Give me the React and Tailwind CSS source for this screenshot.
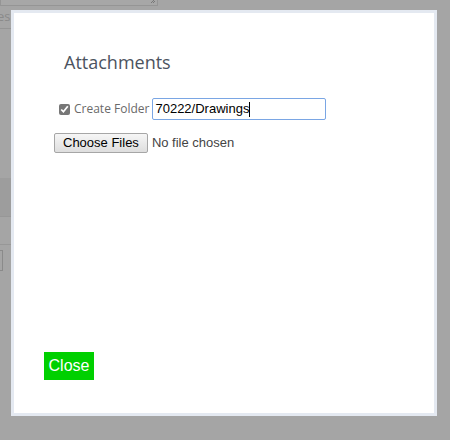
const App = () => {
  return (
    <div className="relative w-[450px] h-[440px] overflow-hidden bg-[#a5a5a5]">
      {/* faint page behind the overlay */}
      <div className="absolute left-0 top-[-2px] w-[158px] h-[8px] border border-[#959595] bg-[#a7a7a7]">
        <svg className="absolute right-[1px] bottom-[1px]" width="6" height="6" viewBox="0 0 6 6">
          <path d="M1 5 L5 1 M3 5 L5 3" stroke="#777" strokeWidth="1" />
        </svg>
      </div>
      <div className="absolute left-[-3px] top-[7px] text-[13px] text-[#8a8a8a] font-['Open_Sans',sans-serif]">es</div>
      <div className="absolute left-0 top-[28px] w-[11px] h-px bg-[#959595]" />
      <div className="absolute left-0 top-[178px] w-[11px] h-[38px] bg-[#9d9d9d]" />
      <div className="absolute left-0 top-[216px] w-[11px] h-px bg-[#979797]" />
      <div className="absolute left-0 top-[244px] w-[11px] h-px bg-[#979797]" />
      <div className="absolute left-[-4px] top-[250px] w-[7px] h-[21px] border border-[#8a8a8a]" />

      {/* modal */}
      <div className="absolute left-[11px] top-[10px] w-[426px] h-[406px] border-[3px] border-[#e4e9f1] bg-white">
        <div className="flex flex-col h-full pl-[50px] pt-[37px]">
          <h2 className="text-[18px] leading-[24px] text-[#4c5360] font-['Open_Sans',sans-serif]">
            Attachments
          </h2>
          <div className="flex items-center mt-[24px] -ml-[5px]">
            <input
              type="checkbox"
              defaultChecked
              className="w-[11px] h-[11px] m-0 accent-[#777]"
            />
            <span className="ml-[4px] text-[12px] text-[#6a6a6a] font-['Open_Sans',sans-serif]">
              Create Folder
            </span>
            <div className="ml-[3px] w-[174px] h-[22px] border border-[#7aa6e4] rounded-[2px] flex items-center px-[2px] text-[13px] text-black font-['Liberation_Sans',Arial,sans-serif]">
              70222/Drawings
              <span className="w-px h-[15px] bg-black" />
            </div>
          </div>
          <div className="flex items-center mt-[13px] -ml-[10px]">
            <div className="h-[20px] px-[8px] flex items-center border border-[#a6a6a6] rounded-[2px] bg-gradient-to-b from-[#f6f6f6] to-[#dedede] text-[13px] text-black font-['Liberation_Sans',Arial,sans-serif]">
              Choose Files
            </div>
            <span className="ml-[4px] text-[13px] text-[#444] font-['Liberation_Sans',Arial,sans-serif]">
              No file chosen
            </span>
          </div>
          <div className="mt-auto mb-[33px] -ml-[20px]">
            <button className="w-[50px] h-[28px] bg-[#00d000] text-white text-[16px] font-['Liberation_Sans',Arial,sans-serif]">
              Close
            </button>
          </div>
        </div>
      </div>
    </div>
  );
};

export default App;
